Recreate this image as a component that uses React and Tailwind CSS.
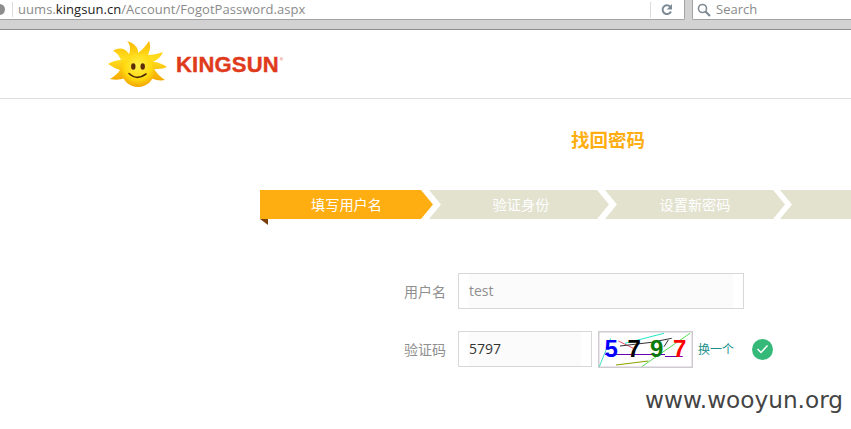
const cjk = "font-['Noto_Sans_CJK_SC','Noto_Sans',sans-serif]";

const SunLogo = () => (
  <svg width="60" height="48" viewBox="0 0 60 48">
    <defs>
      <radialGradient id="face" cx="50%" cy="35%" r="65%">
        <stop offset="0%" stopColor="#fff04a" />
        <stop offset="65%" stopColor="#ffd910" />
        <stop offset="100%" stopColor="#f4a400" />
      </radialGradient>
      <linearGradient id="rays" x1="0" y1="0" x2="0" y2="1">
        <stop offset="0%" stopColor="#fdb800" />
        <stop offset="45%" stopColor="#ffdf20" />
        <stop offset="100%" stopColor="#f6a900" />
      </linearGradient>
    </defs>
    <path
      fill="url(#rays)"
      d="M13 20 C11 15 8 12 5 11 C11 7 17 8 21 14 C23 9 22 4 19 1 C26 3 31 8 30 13 C34 10 38 6 41 1 C43 6 42 11 40 15 C45 15 50 14 55 12 C53 17 49 20 45 22 C50 22 55 24 59 27 C55 29 50 29 46 29 C49 33 52 37 57 40 C52 41 47 40 43 38 L17 38 C12 40 7 40 2 39 C7 36 10 33 12 30 C8 29 4 26 0 24 C5 21 9 20 13 20 Z"
    />
    <circle cx="30" cy="30.5" r="16.5" fill="url(#face)" />
    <ellipse cx="25.3" cy="26.5" rx="2.2" ry="3.2" fill="#5a2c0a" />
    <ellipse cx="34.7" cy="26.5" rx="2.2" ry="3.2" fill="#5a2c0a" />
    <path d="M21 33.5 Q29 41 38 34" fill="none" stroke="#4a2a08" strokeWidth="1.6" strokeLinecap="round" />
  </svg>
);

const Step = ({ label, className, textClass = '' }) => (
  <div className={`h-[29px] flex items-center justify-center text-white text-[14.2px] shrink-0 ${className}`}>
    <span className={textClass}>{label}</span>
  </div>
);

const Captcha = () => (
  <svg width="95" height="37" viewBox="0 0 95 37" className="shrink-0">
    <rect x="0.75" y="0.75" width="93.5" height="35.5" fill="#fff" stroke="#cfcbd0" strokeWidth="1.5" />
    <g fill="none" strokeWidth="1">
      <path d="M1.3 35.7 L12.7 7.3" stroke="#3fe0c0" />
      <path d="M27 12.3 L66 2.3" stroke="#22e8c8" />
      <path d="M43.7 35.7 L92 2.3" stroke="#55dd55" />
      <path d="M18 34 L50.3 30" stroke="#88a000" />
      <path d="M20.3 10 L35.3 17.3" stroke="#e05070" />
      <path d="M22 15 L53.7 11.3 L73.7 7.3" stroke="#333" />
      <path d="M66 15.7 L70.3 9" stroke="#333" />
      <path d="M7 23.5 L67 23.5" stroke="#6a00b0" />
      <path d="M67 25.5 L84.7 25.5" stroke="#6a00b0" />
    </g>
    <g fontFamily="'Liberation Sans',sans-serif" fontWeight="700" fontSize="24">
      <text x="6.5" y="26" fill="#0000ff">5</text>
      <text x="29.5" y="26" fill="#000">7</text>
      <text x="52" y="26" fill="#0a7a0a">9</text>
      <text x="75" y="26" fill="#ff0000">7</text>
    </g>
  </svg>
);

export default function App() {
  return (
    <div className={`relative w-[851px] h-[429px] overflow-hidden bg-white ${cjk}`}>
      {/* browser bar */}
      <div className="h-[30px] bg-[#d2d2d2] border-b border-[#8e8e8e] flex items-start font-['Open_Sans',sans-serif]">
        <div className="w-[685px] h-[20px] bg-white border-b border-r border-[#a3a3a3] rounded-br-[2px] flex items-center">
          <div className="w-[11px] h-[11px] -ml-[6px] rounded-full bg-[#8d8d8d]" />
          <div className="w-px h-[15px] bg-[#dcdcdc] ml-[7px]" />
          <div className="ml-[5px] text-[13px] tracking-[0.05px] text-[#8a8a8a] flex-1 whitespace-nowrap">
            uums.<span className="text-[#222]">kingsun.cn</span>/Account/FogotPassword.aspx
          </div>
          <div className="w-px h-[16px] bg-[#dcdcdc]" />
          <svg width="14" height="14" viewBox="0 0 14 14" className="ml-[9px] mr-[10px]">
            <path d="M11 8.5 A4.4 4.4 0 1 1 10.2 3.6" fill="none" stroke="#7c8a96" strokeWidth="2" />
            <path d="M12 1 L12 6.5 L6.8 6.5 Z" fill="#7c8a96" />
          </svg>
        </div>
        <div className="ml-[7px] flex-1 h-[20px] bg-white border-l border-b border-[#a3a3a3] rounded-bl-[2px] flex items-center pl-[4px]">
          <svg width="14" height="14" viewBox="0 0 14 14">
            <circle cx="5.5" cy="5.5" r="4" fill="none" stroke="#808a92" strokeWidth="1.6" />
            <path d="M8.5 8.5 L13 13" stroke="#808a92" strokeWidth="2.2" />
          </svg>
          <span className="ml-[5px] text-[13px] text-[#8a8a8a]">Search</span>
        </div>
      </div>

      {/* logo header */}
      <div className="h-[69px] border-b border-[#dddddd] pl-[108px] pt-[10px] flex items-start">
        <SunLogo />
        <div className="ml-[8px] mt-[13px] flex items-start">
          <span className="font-['Liberation_Sans',sans-serif] font-bold text-[22px] leading-[24px] text-[#df3a1c] tracking-[0.2px] [-webkit-text-stroke:0.4px_#df3a1c]">KINGSUN</span>
          <span className="text-[7px] leading-[10px] mt-[2px] ml-[1px] text-[#e8846c]">®</span>
        </div>
      </div>

      <h1 className="mt-[27px] pl-[571px] text-[18.5px] leading-[26px] font-bold text-[#ffae12]">找回密码</h1>

      {/* steps */}
      <div className="relative mt-[38px] pl-[260px] flex">
        <Step label="填写用户名" className="w-[173px] bg-[#ffae12] [clip-path:polygon(0_0,161px_0,100%_50%,161px_100%,0_100%)]" />
        <Step label="验证身份" textClass="ml-[4px]" className="w-[180px] -ml-[4px] bg-[#e2e2cf] [clip-path:polygon(0_0,168px_0,100%_50%,168px_100%,0_100%,12px_50%)]" />
        <Step label="设置新密码" className="w-[180px] -ml-[4px] bg-[#e2e2cf] [clip-path:polygon(0_0,168px_0,100%_50%,168px_100%,0_100%,12px_50%)]" />
        <Step label="" className="w-[180px] -ml-[5px] bg-[#e2e2cf] [clip-path:polygon(0_0,168px_0,100%_50%,168px_100%,0_100%,12px_50%)]" />
        <div className="absolute left-[260px] top-[29px] w-[8px] h-[6px] bg-[#7a3f0c] [clip-path:polygon(0_0,100%_0,100%_100%)]" />
      </div>

      {/* form */}
      <div className="mt-[54px] flex flex-col gap-[22px] text-[14px] text-[#8f8f8f]">
        <div className="flex items-center h-[36px]">
          <label className="w-[446px] text-right">用户名</label>
          <div className="ml-[12px] w-[286px] h-[36px] border border-[#d8d8d8] px-[10px] bg-white">
            <div className="h-full bg-[#fbfbfb] text-[14px] leading-[33px] font-['Open_Sans',sans-serif] text-[#8f8f8f]">test</div>
          </div>
        </div>
        <div className="flex items-center h-[36px]">
          <label className="w-[446px] text-right">验证码</label>
          <div className="ml-[12px] w-[134px] h-[36px] border border-[#d8d8d8] px-[10px] bg-white">
            <div className="h-full bg-[#fbfbfb] text-[14px] leading-[33px] font-['Open_Sans',sans-serif] text-[#333]">5797</div>
          </div>
          <div className="ml-[6px]"><Captcha /></div>
          <a className="ml-[5px] text-[12px] text-[#1a8f8a]">换一个</a>
          <div className="ml-[18px] w-[21px] h-[21px] rounded-full bg-[#35b978] flex items-center justify-center">
            <svg width="13" height="10" viewBox="0 0 13 10">
              <path d="M1.5 5 L5 8.5 L11.5 1.5" fill="none" stroke="#fff" strokeWidth="1.5" />
            </svg>
          </div>
        </div>
      </div>

      <div className="absolute left-[645px] top-[383px] font-['DejaVu_Sans',sans-serif] text-[23.2px] leading-[34px] text-[#444] whitespace-nowrap">www.wooyun.org</div>
    </div>
  );
}
